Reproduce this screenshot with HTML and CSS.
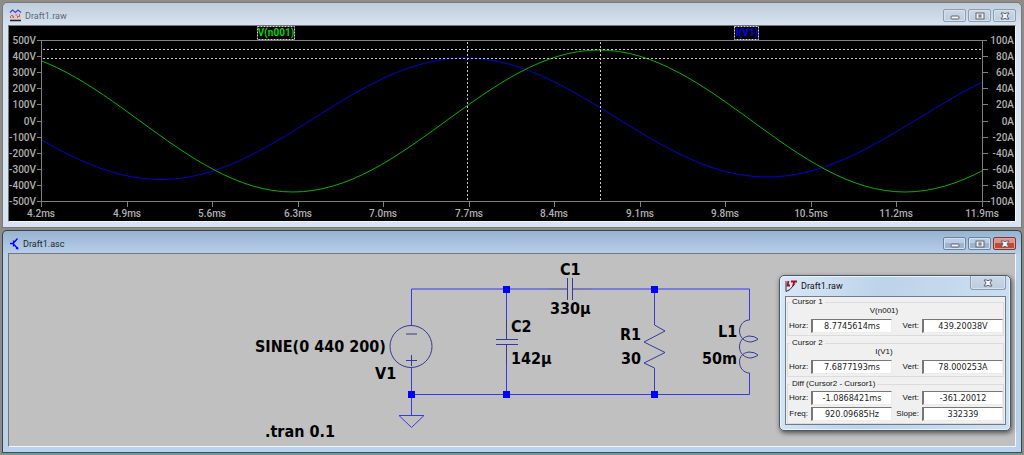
FILE: index.html
```html
<!DOCTYPE html>
<html lang="en">
<head>
<meta charset="utf-8">
<meta name="viewport" content="width=device-width, initial-scale=1">
<title>Draft1</title>
<link rel="stylesheet" href="styles.css">
</head>
<body>
<main class="workspace">
  <section class="window window-plot" aria-label="Waveform viewer">
    <header class="titlebar">
      <svg class="app-icon" viewBox="0 0 13 13" aria-hidden="true">
        <rect x="1" y="4" width="11" height="8" fill="#d2cfd0"/>
        <path d="M1 3.500l2.500-2.500L6.500 3.500l2.500-2.500L12 3.500" fill="none" stroke="#4040e8" stroke-width="1.200"/>
        <path d="M1.500 9V6.500h3V9M6.500 6h2v3M10.500 5v2M3 8h2M9 7.500h2" fill="none" stroke="#d06060" stroke-dasharray="2 1"/>
        <path d="M1 11.500h11" stroke="#222" stroke-width="1.500"/>
      </svg>
      <h1 class="title">Draft1.raw</h1>
      <div class="controls">
        <button class="control" aria-label="Minimize"><svg viewBox="0 0 10 8"><rect x="1" y="4" width="8" height="3" rx="1"/></svg></button>
        <button class="control" aria-label="Maximize"><svg viewBox="0 0 10 8"><rect x="1" y="1" width="8" height="6"/><rect x="4" y="3" width="2" height="2"/></svg></button>
        <button class="control" aria-label="Close"><svg viewBox="0 0 10 8"><path d="M1 1h3l1 1 1-1h3L7 4l2 3H6L5 6 4 7H1l2-3z"/></svg></button>
      </div>
    </header>
    <div class="plot">
      <svg class="canvas" viewBox="9 26 1006 195" role="img" aria-label="V(n001) and I(V1) against time">
        <defs><clipPath id="area"><rect x="42" y="40" width="940" height="162"/></clipPath></defs>
        <g class="axis">
          <path d="M37 40.500H987M37 201.500H987M41.500 40V207M982.500 40V207"/>
          <path d="M37 56.500h5M37 72.500h5M37 88.500h5M37 104.500h5M37 121.500h5M37 137.500h5M37 153.500h5M37 169.500h5M37 185.500h5"/>
          <path d="M982 56.500h6M982 72.500h6M982 88.500h6M982 104.500h6M982 121.500h6M982 137.500h6M982 153.500h6M982 169.500h6M982 185.500h6"/>
          <path d="M127.500 202v5M212.500 202v5M298.500 202v5M383.500 202v5M469.500 202v5M554.500 202v5M640.500 202v5M725.500 202v5M811.500 202v5M896.500 202v5"/>
        </g>
        <g clip-path="url(#area)" fill="none">
          <path class="trace-i" d="M-145 60C-34 60 50 179.500 161 179.500C272 179.500 354 58 465 58C575 58 657 177 767 177C878 177 962 58 1073 58"/>
          <path class="trace-v" d="M-13 50C98 50 182 192 293 192C404 192 488 50 599 50C710 50 794 192 905 192C1016 192 1100 50 1211 50"/>
        </g>
        <path class="cursor" d="M43 49.500H982M43 58.500H982M467.500 42V201M600.500 42V201"/>
        <rect class="marker" x="257.500" y="26.500" width="37" height="13"/>
        <rect class="marker" x="734.500" y="26.500" width="24" height="13"/>
        <g class="plot-text" text-anchor="middle">
          <text class="label-v" x="276" y="36">V(n001)</text>
          <text class="label-i" x="747" y="36">I(V1)</text>
          <text x="41" y="217">4.2ms</text><text x="127" y="217">4.9ms</text><text x="212" y="217">5.6ms</text><text x="298" y="217">6.3ms</text><text x="383" y="217">7.0ms</text><text x="469" y="217">7.7ms</text><text x="554" y="217">8.4ms</text><text x="640" y="217">9.1ms</text><text x="725" y="217">9.8ms</text><text x="811" y="217">10.5ms</text><text x="896" y="217">11.2ms</text><text x="982" y="217">11.9ms</text>
        </g>
        <g class="plot-text" text-anchor="end">
          <text x="36" y="44">500V</text><text x="36" y="60">400V</text><text x="36" y="76">300V</text><text x="36" y="92">200V</text><text x="36" y="108">100V</text><text x="36" y="125">0V</text><text x="36" y="141">-100V</text><text x="36" y="157">-200V</text><text x="36" y="173">-300V</text><text x="36" y="189">-400V</text><text x="36" y="205">-500V</text>
          <text x="1014" y="44">100A</text><text x="1014" y="60">80A</text><text x="1014" y="76">60A</text><text x="1014" y="92">40A</text><text x="1014" y="108">20A</text><text x="1014" y="125">0A</text><text x="1014" y="141">-20A</text><text x="1014" y="157">-40A</text><text x="1014" y="173">-60A</text><text x="1014" y="189">-80A</text><text x="1014" y="205">-100A</text>
        </g>
      </svg>
    </div>
  </section>

  <section class="window window-schematic" aria-label="Schematic editor">
    <header class="titlebar">
      <svg class="app-icon" viewBox="0 0 13 13" aria-hidden="true">
        <path d="M1 6.500h3M4.500 3.500v6M5 5.500L8.500 1.500M5 7.500l3.500 4" fill="none" stroke="#00f" stroke-width="1.300"/>
        <path d="M9.500 12.500L6.500 12 9 9.500z" fill="#00f"/>
      </svg>
      <h1 class="title">Draft1.asc</h1>
      <div class="controls">
        <button class="control" aria-label="Minimize"><svg viewBox="0 0 10 8"><rect x="1" y="4" width="8" height="3" rx="1"/></svg></button>
        <button class="control" aria-label="Maximize"><svg viewBox="0 0 10 8"><rect x="1" y="1" width="8" height="6"/><rect x="4" y="3" width="2" height="2"/></svg></button>
        <button class="control control-close" aria-label="Close"><svg viewBox="0 0 10 8"><path d="M1 1h3l1 1 1-1h3L7 4l2 3H6L5 6 4 7H1l2-3z"/></svg></button>
      </div>
    </header>
    <div class="sheet">
      <svg class="canvas" viewBox="9 254 1006 192" role="img" aria-label="Circuit with V1, C1, C2, R1 and L1">
        <g class="wire">
          <path d="M411.500 325V289H549M591 289H749.500V320M506.500 289V320M506.500 363V394.500M654.500 289V325M654.500 368V394.500M749.500 373V394.500H411.500M411.500 368V415.500"/>
          <path d="M399 415.500H424L411.500 427.500Z"/>
        </g>
        <g class="part">
          <circle cx="411" cy="346.500" r="21"/>
          <path d="M406 334H417M406 360.500H417M411.500 355V366"/>
          <path d="M506.500 320V339M496 339.500H518M496 344.500H518M506.500 345V363"/>
          <path d="M549 289H567.500M567.500 278V300M572.500 278V300M573 289H591"/>
          <path d="M654.500 325L665 331L644 342L665 352.500L644 363L654.500 368"/>
          <path d="M749.500 320C743 320 739.500 326 739.500 331C739.500 337 744 342 751 342Q758 340 758 339Q755 336 749 336C742 337 739.500 342 739.500 347C739.500 353 744 358 751 358Q758 356 758 355Q755 352 749 352C742 353 739.500 357 739.500 362C739.500 368 744 373 749.500 373"/>
        </g>
        <g class="node">
          <rect x="503" y="286" width="7" height="7"/><rect x="651" y="286" width="7" height="7"/><rect x="408" y="391" width="7" height="7"/><rect x="503" y="391" width="7" height="7"/><rect x="651" y="391" width="7" height="7"/>
        </g>
        <g class="part-text">
          <text x="255" y="352">SINE(0 440 200)</text><text x="375" y="379">V1</text><text x="265" y="437">.tran 0.1</text>
          <text x="511" y="332">C2</text><text x="511" y="364">142µ</text><text x="560" y="275">C1</text><text x="550" y="314">330µ</text>
          <text x="620" y="340">R1</text><text x="621" y="364">30</text><text x="718" y="337">L1</text><text x="702" y="364">50m</text>
        </g>
      </svg>
      <section class="dialog" aria-label="Cursor readout">
        <header class="dialog-bar">
          <svg class="dialog-icon" viewBox="0 0 12 12" aria-hidden="true">
            <path d="M1 1v10.500l4-2 5-6" fill="none" stroke="#333"/>
            <path d="M3.500 1L2.500 5.500h2.500M6 1.500h6M9.500 1L8 6" fill="none" stroke="#a01020" stroke-width="1.800"/>
          </svg>
          <h2 class="title">Draft1.raw</h2>
          <button class="control control-dialog" aria-label="Close"><svg viewBox="0 0 10 8"><path d="M1 1h3l1 1 1-1h3L7 4l2 3H6L5 6 4 7H1l2-3z"/></svg></button>
        </header>
        <form class="readout">
          <fieldset class="group">
            <legend>Cursor 1</legend>
            <p class="signal">V(n001)</p>
            <div class="row">
              <label for="h1">Horz:</label><input id="h1" value="8.7745614ms" readonly>
              <label for="v1">Vert:</label><input id="v1" value="439.20038V" readonly>
            </div>
          </fieldset>
          <fieldset class="group">
            <legend>Cursor 2</legend>
            <p class="signal">I(V1)</p>
            <div class="row">
              <label for="h2">Horz:</label><input id="h2" value="7.6877193ms" readonly>
              <label for="v2">Vert:</label><input id="v2" value="78.000253A" readonly>
            </div>
          </fieldset>
          <fieldset class="group group-diff">
            <legend>Diff (Cursor2 - Cursor1)</legend>
            <div class="row">
              <label for="h3">Horz:</label><input id="h3" value="-1.0868421ms" readonly>
              <label for="v3">Vert:</label><input id="v3" value="-361.20012" readonly>
              <label for="f3">Freq:</label><input id="f3" value="920.09685Hz" readonly>
              <label for="s3">Slope:</label><input id="s3" value="332339" readonly>
            </div>
          </fieldset>
        </form>
      </section>
    </div>
  </section>
</main>
</body>
</html>
```
FILE: styles.css
```css
* { box-sizing: border-box; }

body {
  margin: 0;
  background: #8f8b86;
  font-family: "Liberation Sans", Arial, sans-serif;
}

.workspace {
  display: flex;
  flex-direction: column;
  gap: 2px;
  padding: 2px;
}

.window {
  border: 1px solid #77797b;
  border-radius: 5px 5px 0 0;
  padding: 0 5px 5px;
}

.window-plot { background: linear-gradient(#bfcddb, #d8e4f1 24px); }

.window-schematic {
  background: linear-gradient(#98b3d1, #b9d1ea 24px);
  border-color: #33474f;
  border-bottom-color: #006a72;
}

.titlebar {
  display: flex;
  align-items: center;
  height: 22px;
  padding: 3px 0 0 1px;
}

.app-icon { width: 13px; height: 13px; margin-right: 3px; }
.window-schematic .app-icon { margin-right: 1px; }

.title {
  flex: 1;
  margin: 0;
  font: 400 9px Roboto, "Liberation Sans", sans-serif;
  color: #1c2733;
}

.window-plot .title { color: #5d6872; }

.controls { display: flex; gap: 2px; }

.control {
  display: grid;
  place-items: center;
  width: 23px;
  height: 13px;
  padding: 0;
  border: 1px solid #8d9db0;
  border-radius: 2px;
  background: linear-gradient(#cad8e6, #bccddd);
  box-shadow: inset 0 0 0 1px #d5e1ec;
}

.control svg { width: 10px; height: 8px; fill: #f4f4f4; stroke: #5c6570; }

.window-schematic .titlebar .control {
  border-color: #6d8299;
  background: linear-gradient(#b9cee4 50%, #9ab5d1 50%);
}

.window-schematic .titlebar .control-close {
  border-color: #80372f;
  background: linear-gradient(#dc9488 50%, #c04a35 50%);
  box-shadow: inset 0 0 0 1px #e0a297;
}

.plot, .sheet {
  border: 1px solid #73777a;
  border-right-color: #f4f6f8;
  border-bottom-color: #f4f6f8;
}

.plot { background: #000; }
.sheet { position: relative; background: #c0c0c0; }

.canvas { display: block; width: 100%; }

.axis { fill: none; stroke: #808080; }
.trace-v { stroke: #00b400; }
.trace-i { stroke: #0000d8; }
.cursor { fill: none; stroke: #c8c8c8; stroke-dasharray: 2 2; }
.marker { fill: none; stroke: #d8d8d8; stroke-dasharray: 2 1; }
.plot-text { font: 500 10px Roboto, "Liberation Sans", sans-serif; fill: #b0b0b0; }
.plot-text .label-v { font-weight: 700; fill: #00d800; }
.plot-text .label-i { font-weight: 700; fill: #0000ff; }

.wire { fill: none; stroke: #3838e8; }
.part { fill: none; stroke: #383898; }
.node { fill: #00f; }
.part-text { font: 700 16px "DejaVu Sans Condensed", "Noto Sans", sans-serif; fill: #000; }

.dialog {
  position: absolute;
  right: 4px;
  top: 21px;
  width: 232px;
  padding: 0 4px 5px 5px;
  border: 1px solid #4c5a66;
  border-radius: 5px;
  background: linear-gradient(100deg, #d9e8f7, #bdd3ea 40%, #cfe0f2);
  box-shadow: inset 0 0 0 1px #e8f2fb, 1px 2px 5px #0009;
}

.dialog-bar { display: flex; align-items: center; height: 20px; }
.dialog-icon { width: 12px; height: 12px; margin-right: 4px; }
.dialog .title { color: #111; }

.control-dialog {
  align-self: flex-start;
  width: 36px;
  height: 14px;
  border-top: 0;
  border-radius: 0 0 3px 3px;
}

.readout {
  display: grid;
  gap: 3px;
  padding: 1px 1px 0;
  border: 1px solid #6e7c89;
  background: #f0f0f0;
  font-size: 8px;
  line-height: 10px;
  color: #111;
}

.group {
  min-width: 0;
  margin: 0;
  padding: 0 0 2px 1px;
  border: 1px solid #dcdcdc;
}

.group-diff { padding-top: 3px; }

.group legend { margin-left: 1px; padding: 0 2px; line-height: 8px; }
.signal { margin: 0 0 3px; padding-right: 24px; text-align: center; }

.row {
  display: grid;
  grid-template-columns: 22px 81px 1fr 81px;
  align-items: center;
  row-gap: 2px;
}

.row label { padding-right: 3px; text-align: right; }

.row input {
  width: 100%;
  height: 14px;
  padding: 0;
  border: 1px solid #ececec;
  border-top: 1px solid #777;
  border-left: 2px solid #777;
  background: #fff;
  font: 9px "DejaVu Sans Condensed", "Noto Sans", sans-serif;
  text-align: center;
  color: #222;
}
```
